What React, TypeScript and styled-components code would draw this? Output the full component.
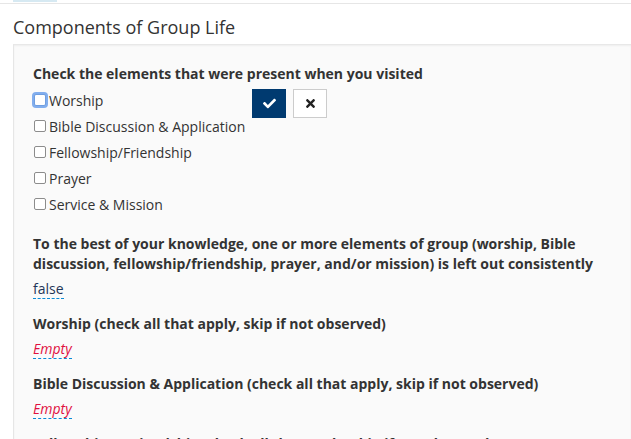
import React, { useState } from 'react';
import styled, { createGlobalStyle } from 'styled-components';
import { FaCheck, FaTimes } from 'react-icons/fa';

const GlobalStyle = createGlobalStyle`
  html, body {
    margin: 0;
    padding: 0;
    background: #ffffff;
    overflow: hidden;
  }
  body {
    font-family: "Open Sans", "Liberation Sans", sans-serif;
    color: #333333;
    font-size: 14px;
  }
`;

const Page = styled.div`
  width: 631px;
  height: 439px;
  overflow: hidden;
`;

const TopBar = styled.div`
  height: 3px;
  border-bottom: 1px solid #e6e6e6;
  padding-left: 13px;
`;

const TabEdge = styled.div`
  width: 44px;
  height: 2px;
  background: #d6e9f2;
`;

const Title = styled.h3`
  margin: 0;
  padding: 11px 0 0 13px;
  height: 29px;
  font-size: 18px;
  font-weight: 400;
  line-height: 25px;
  color: #333333;
`;

const Panel = styled.section`
  margin-left: 13px;
  background: #fafafa;
  border-top: 1px solid #e8e8e8;
  border-left: 1px solid #e6e6e6;
  box-shadow: inset 0 1px 2px rgba(0, 0, 0, 0.05);
  padding: 19px 0 0 19px;
  min-height: 420px;
`;

const FieldGroup = styled.div<{ $gap?: number }>`
  margin-bottom: ${(p) => p.$gap ?? 15}px;
`;

const Label = styled.div`
  font-weight: 700;
  font-size: 14px;
  line-height: 20px;
  color: #333333;
`;

const EditForm = styled.form`
  display: flex;
  align-items: flex-start;
  margin-top: 3px;
`;

const CheckList = styled.div`
  display: flex;
  flex-direction: column;
`;

const CheckRow = styled.label`
  display: flex;
  align-items: center;
  height: 26px;
  font-size: 14px;
  color: #333333;
  cursor: pointer;
`;

const Box = styled.input`
  appearance: none;
  width: 12px;
  height: 12px;
  margin: 0 3px 0 1px;
  border: 1px solid #8c8c8c;
  border-radius: 2px;
  background: #ffffff;
  outline: none;
  &:focus {
    border-color: #6f9ee0;
    box-shadow: 0 0 0 2px rgba(100, 155, 235, 0.8);
  }
`;

const Buttons = styled.div`
  display: flex;
  gap: 7px;
  margin: 2px 0 0 7px;
`;

const IconButton = styled.button<{ $primary?: boolean }>`
  width: 34px;
  height: 29px;
  padding: 0;
  display: flex;
  align-items: center;
  justify-content: center;
  border: 1px solid ${(p) => (p.$primary ? '#003a70' : '#cccccc')};
  background: ${(p) => (p.$primary ? '#003a70' : '#ffffff')};
  color: ${(p) => (p.$primary ? '#ffffff' : '#222222')};
  border-radius: 0;
  font-size: 13px;
`;

const Value = styled.span<{ $empty?: boolean }>`
  display: inline-block;
  margin-top: 5px;
  font-size: 14px;
  line-height: 19px;
  color: ${(p) => (p.$empty ? '#e0103f' : '#1f3558')};
  font-style: ${(p) => (p.$empty ? 'italic' : 'normal')};
  border-bottom: 1px dashed #0a8ad6;
`;

const elements = [
  'Worship',
  'Bible Discussion & Application',
  'Fellowship/Friendship',
  'Prayer',
  'Service & Mission',
];

const questions = [
  { label: 'Worship (check all that apply, skip if not observed)', value: '' },
  { label: 'Bible Discussion & Application (check all that apply, skip if not observed)', value: '' },
  { label: 'Fellowship & Friendship (check all that apply, skip if not observed)', value: '' },
];

export default function App() {
  const [checked, setChecked] = useState<string[]>([]);
  const toggle = (name: string) =>
    setChecked((prev) => (prev.includes(name) ? prev.filter((n) => n !== name) : [...prev, name]));

  return (
    <Page>
      <GlobalStyle />
      <TopBar>
        <TabEdge />
      </TopBar>
      <Title>Components of Group Life</Title>
      <Panel>
        <FieldGroup $gap={17}>
          <Label>Check the elements that were present when you visited</Label>
          <EditForm onSubmit={(e) => e.preventDefault()}>
            <CheckList>
              {elements.map((name, i) => (
                <CheckRow key={name}>
                  <Box
                    type="checkbox"
                    autoFocus={i === 0}
                    checked={checked.includes(name)}
                    onChange={() => toggle(name)}
                  />
                  {name}
                </CheckRow>
              ))}
            </CheckList>
            <Buttons>
              <IconButton $primary type="submit">
                <FaCheck />
              </IconButton>
              <IconButton type="button">
                <FaTimes />
              </IconButton>
            </Buttons>
          </EditForm>
        </FieldGroup>
        <FieldGroup>
          <Label>
            To the best of your knowledge, one or more elements of group (worship, Bible discussion,
            fellowship/friendship, prayer, and/or mission) is left out consistently
          </Label>
          <Value>false</Value>
        </FieldGroup>
        {questions.map((q) => (
          <FieldGroup key={q.label}>
            <Label>{q.label}</Label>
            <Value $empty={!q.value}>{q.value || 'Empty'}</Value>
          </FieldGroup>
        ))}
      </Panel>
    </Page>
  );
}
